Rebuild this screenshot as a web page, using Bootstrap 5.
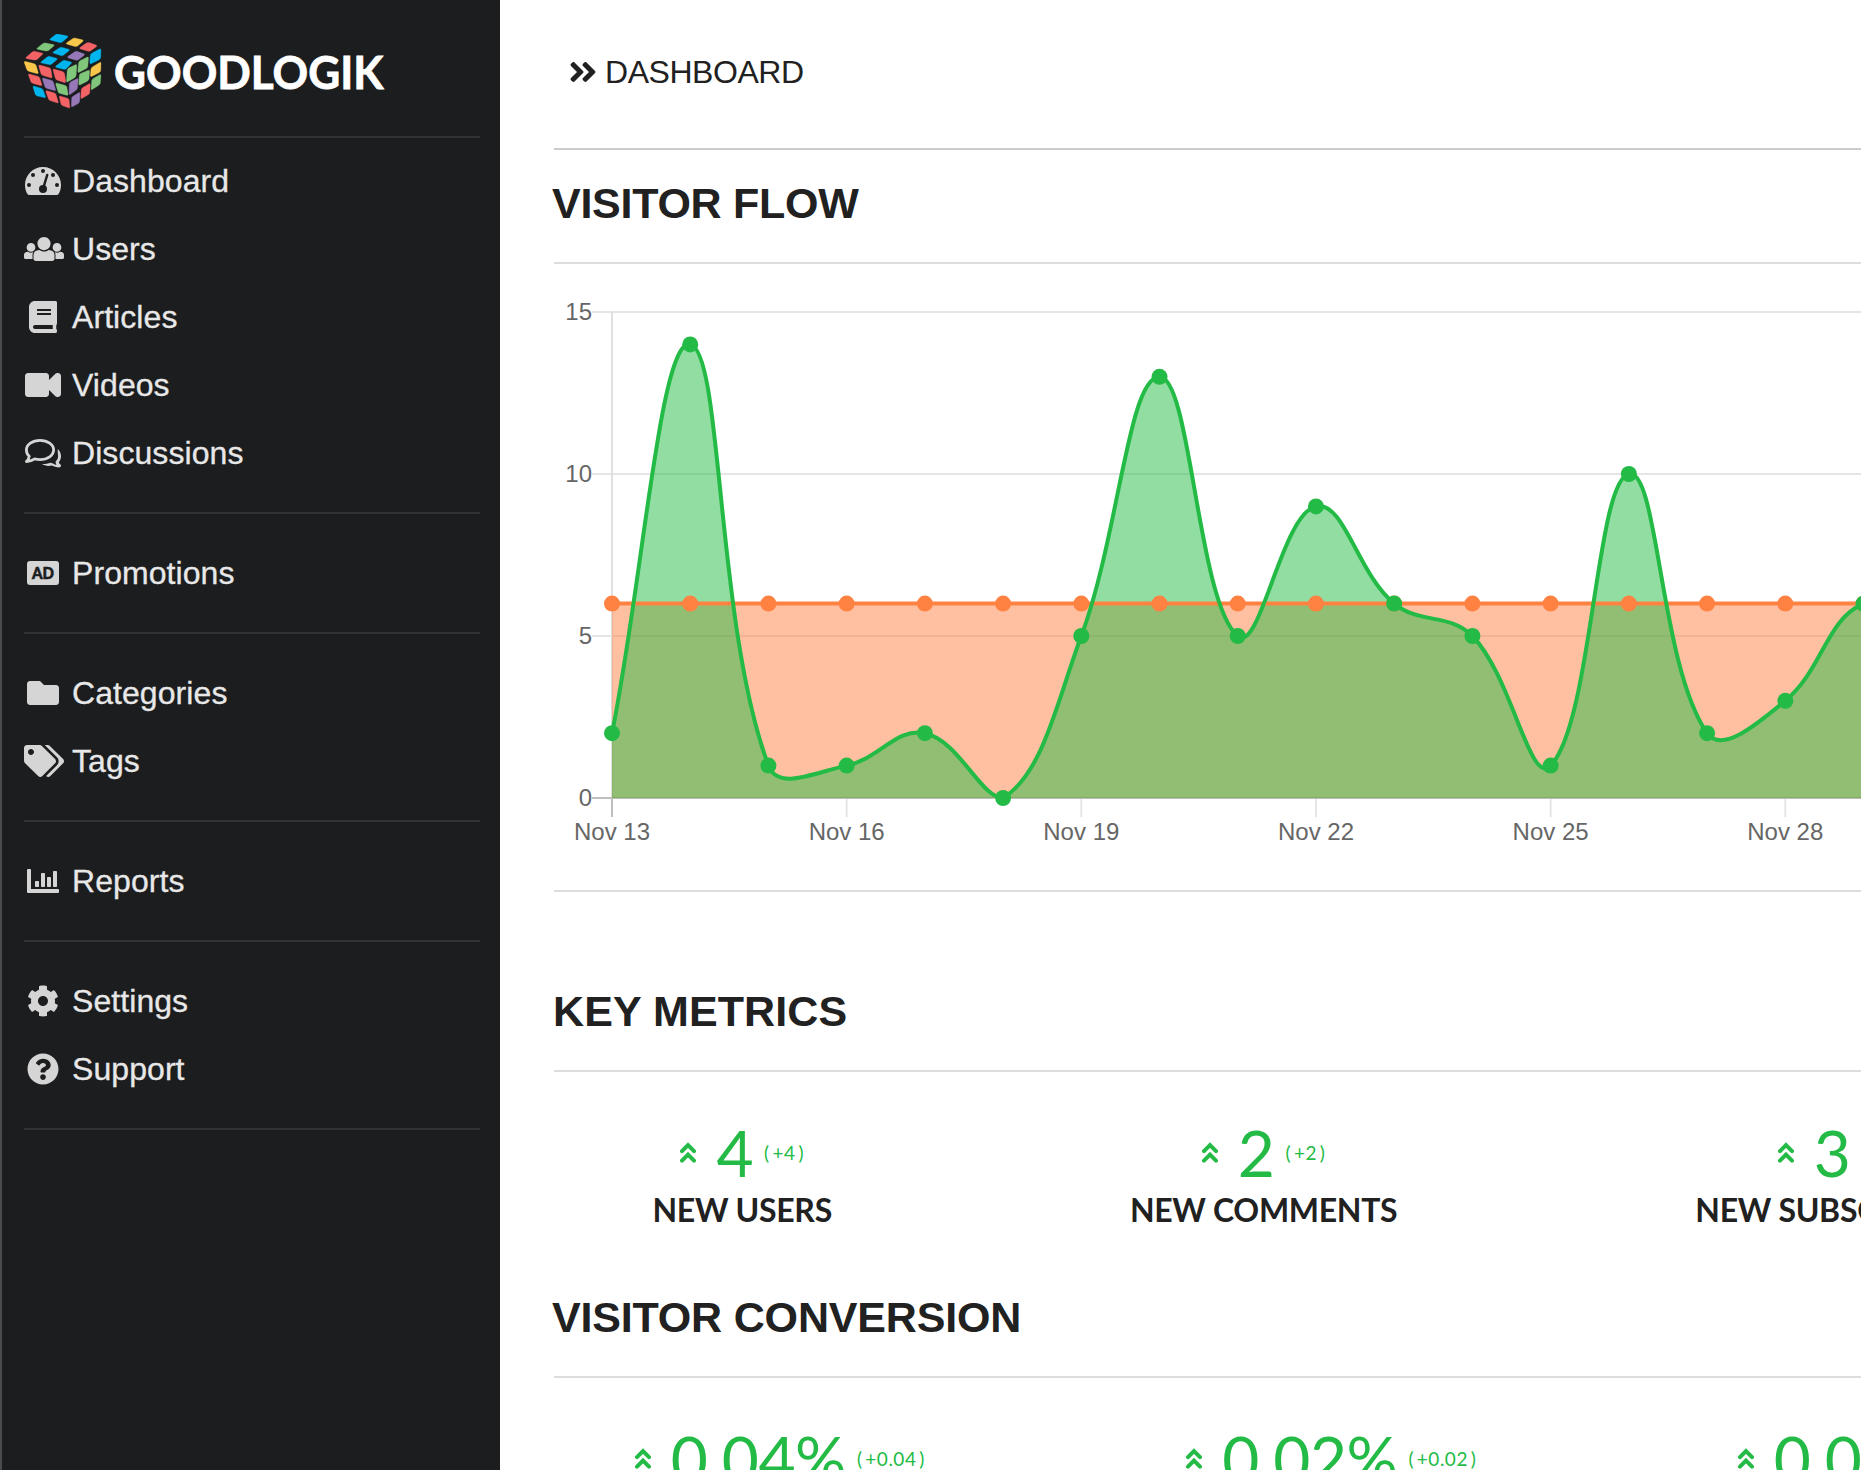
<!DOCTYPE html>
<html lang="en">
<head>
<meta charset="utf-8">
<meta name="viewport" content="width=device-width, initial-scale=1">
<title>GoodLogik Dashboard</title>
<link href="https://cdn.jsdelivr.net/npm/bootstrap@5.3.0/dist/css/bootstrap.min.css" rel="stylesheet">
<style>
  body { font-family: "Liberation Sans", Arial, sans-serif; color: #212121; background: #fff; }
  .app-shell { height: 1470px; }
  .side-panel { width: 500px; background: #1c1d1f; border-left: 2px solid #4a4b4d; padding: 34px 20px 0 22px; }
  .brand-box { height: 102px; }
  .side-panel hr { margin: 25px 0; border: 0; border-top: 2px solid #323335; opacity: 1; }
  .side-panel hr.hr-first { margin: 0 0 9px; }
  .side-link { height: 68px; line-height: 68px; font-size: 32px; color: #e8e8e8; padding: 0; letter-spacing: .07px; -webkit-text-stroke: .3px #e8e8e8; }
  .side-icon { width: 38px; height: 32px; margin-right: 10px; overflow: visible; fill: #d5d5d5; flex: none; -webkit-text-stroke: 0; }
  .main-area { padding-left: 54px; min-width: 0; }
  .main-area hr { margin: 0; border: 0; border-top: 2px solid #ddd; opacity: 1; }
  .main-area hr.hr-top { border-color: #ccc; }
  .crumb-bar { height: 148px; padding: 0 0 4px 15px; font-size: 32px; letter-spacing: -.45px; }
  .sec-title { font-size: 43px; font-weight: 700; line-height: 52px; margin: 27px 0 33px -2px; letter-spacing: -.27px; white-space: nowrap; }
  .sec-title.title-metrics { margin-top: 93px; margin-left: -1px; letter-spacing: .1px; }
  .sec-title.title-conversion { margin-top: 61px; letter-spacing: -.18px; }
  .chart-box { height: 626px; }
  .chart-box text { font-size: 24px; fill: #666; }
  .stat-row { font-family: Lato, sans-serif; margin-top: 49px; }
  .stat-row.by-content { gap: 298px; padding-left: 98.5px; }
  .stat-row.by-width > div { width: 551.5px; flex: none; }
  .stat-row.by-width { margin-left: -50px; }
  .stat-num { height: 64px; line-height: 64px; font-size: 64px; color: #23bb46; white-space: nowrap; letter-spacing: -.5px; }
  .stat-num svg { width: 16px; height: 21px; margin-right: 20px; margin-bottom: 2px; }
  .stat-diff { font-size: 19px; margin-left: 11px; letter-spacing: .5px; }
  .stat-label { font-size: 32px; font-weight: 700; line-height: 40px; margin-top: 5px; white-space: nowrap; letter-spacing: -.3px; }
</style>
</head>
<body class="overflow-hidden">
<svg class="d-none">
  <symbol id="up2" viewBox="0 0 16 21"><path d="M2 9.2 8 3.2l6 6M2 18.7l6-6 6 6" fill="none" stroke="#23bb46" stroke-width="4" stroke-linecap="round"/></symbol>
</svg>
<div class="app-shell d-flex overflow-hidden">
  <aside class="side-panel flex-shrink-0">
    <div class="brand-box">
      <svg width="370" height="76" viewBox="24 34 370 76">
        <g id="cube" transform="scale(.33333)"></g>
        <text x="114" y="88.5" font-family="Lato, sans-serif" font-weight="700" font-size="45" fill="#fff" stroke="#fff" stroke-width=".8" textLength="269.5" lengthAdjust="spacingAndGlyphs">GOODLOGIK</text>
      </svg>
    </div>
    <hr class="hr-first">
    <nav class="nav flex-column">
      <a class="nav-link side-link d-flex align-items-center" href="#"><svg class="side-icon" viewBox="0 0 38 32"><g transform="translate(1 0)"><path transform="scale(.0625)" d="M75.694 480a48.02 48.02 0 0 1-42.448-25.571C12.023 414.3 0 368.556 0 320 0 160.942 128.942 32 288 32s288 128.942 288 288c0 48.556-12.023 94.3-33.246 134.429A48.018 48.018 0 0 1 500.306 480H75.694z"/><g fill="#1c1d1f"><circle cx="18" cy="6" r="2"/><circle cx="8" cy="10" r="2"/><circle cx="28" cy="10" r="2"/><circle cx="4" cy="20" r="2"/><circle cx="32" cy="20" r="2"/><circle cx="18" cy="24" r="4"/></g><path d="M18.3 23 22.2 10" stroke="#1c1d1f" stroke-width="2.5" stroke-linecap="round"/></g></svg>Dashboard</a>
      <a class="nav-link side-link d-flex align-items-center" href="#"><svg class="side-icon" viewBox="0 0 38 32"><path transform="scale(.0625)" d="M320 64c57.99 0 105 47.01 105 105s-47.01 105-105 105-105-47.01-105-105S262.01 64 320 64zm113.463 217.366l-39.982-9.996c-49.168 35.365-108.766 27.473-146.961 0l-39.982 9.996C174.485 289.379 152 318.177 152 351.216V412c0 19.882 16.118 36 36 36h264c19.882 0 36-16.118 36-36v-60.784c0-33.039-22.485-61.837-54.537-69.85zM528 300c38.66 0 70-31.34 70-70s-31.34-70-70-70-70 31.34-70 70 31.34 70 70 70zm-416 0c38.66 0 70-31.34 70-70s-31.34-70-70-70-70 31.34-70 70 31.34 70 70 70zm24 112v-60.784c0-16.551 4.593-32.204 12.703-45.599-29.988 14.72-63.336 8.708-85.69-7.37l-26.655 6.664C14.99 310.252 0 329.452 0 351.477V392c0 13.255 10.745 24 24 24h112.169a52.417 52.417 0 0 1-.169-4zm467.642-107.09l-26.655-6.664c-27.925 20.086-60.89 19.233-85.786 7.218C499.369 318.893 504 334.601 504 351.216V412c0 1.347-.068 2.678-.169 4H616c13.255 0 24-10.745 24-24v-40.523c0-22.025-14.99-41.225-36.358-46.567z"/></svg>Users</a>
      <a class="nav-link side-link d-flex align-items-center" href="#"><svg class="side-icon" viewBox="0 0 38 32"><path transform="translate(5 0) scale(.0625)" d="M448 360V24c0-13.3-10.7-24-24-24H96C43 0 0 43 0 96v320c0 53 43 96 96 96h328c13.3 0 24-10.7 24-24v-16c0-7.5-3.5-14.3-8.9-18.7-4.2-15.4-4.2-59.3 0-74.7 5.4-4.3 8.9-11.1 8.9-18.6zM128 134c0-3.3 2.7-6 6-6h212c3.3 0 6 2.7 6 6v20c0 3.3-2.7 6-6 6H134c-3.3 0-6-2.7-6-6v-20zm0 64c0-3.3 2.7-6 6-6h212c3.3 0 6 2.7 6 6v20c0 3.3-2.7 6-6 6H134c-3.3 0-6-2.7-6-6v-20zm253.4 250H96c-17.7 0-32-14.3-32-32 0-17.6 14.4-32 32-32h285.4c-1.9 17.1-1.9 46.9 0 64z"/></svg>Articles</a>
      <a class="nav-link side-link d-flex align-items-center" href="#"><svg class="side-icon" viewBox="0 0 38 32"><path transform="translate(1 0) scale(.0625)" d="M528 64h-12.118a48 48 0 0 0-33.941 14.059L384 176v-64c0-26.51-21.49-48-48-48H48C21.49 64 0 85.49 0 112v288c0 26.51 21.49 48 48 48h288c26.51 0 48-21.49 48-48v-64l97.941 97.941A48 48 0 0 0 515.882 448H528c26.51 0 48-21.49 48-48V112c0-26.51-21.49-48-48-48z"/></svg>Videos</a>
      <a class="nav-link side-link d-flex align-items-center" href="#"><svg class="side-icon" viewBox="0 0 38 32"><path d="M16 3.4C23.6 3.4 29.6 7.6 29.6 13S23.600 22.600 16 22.600c-1.900 0-3.700-.3-5.300-.7-2.300 1.600-5 2.700-8.300 2.700 1.600-1.600 2.600-3.300 2.800-5.300C3.300 17.500 2.400 15.400 2.400 13 2.400 7.600 8.400 3.400 16 3.400z" fill="none" stroke="#d5d5d5" stroke-width="2.800" stroke-linejoin="round"/><path d="M33.800 12c2 2 3.200 4.500 3.200 7.200 0 2.300-.8 4.300-2.200 6 .3 1 .9 1.500 1.700 2.300 1.200 1.200.3 2.900-1.400 2.900-2.700 0-5.100-.7-7.200-1.800-4 .8-7.600.1-9.900-1.500 3.500 0 6.200-.5 8.500-1.400 1.500.3 2.300.6 3 1 .9.500 1.800.9 2.900 1.200-.6-1.100-.8-2.200-.8-3.400 1.700-1.500 2.500-3.300 2.500-5.200 0-2.200-.6-4.200-.3-7.300z"/></svg>Discussions</a>
    </nav>
    <hr>
    <nav class="nav flex-column">
      <a class="nav-link side-link d-flex align-items-center" href="#"><svg class="side-icon" viewBox="0 0 38 32"><rect x="3" y="4" width="32" height="24" rx="3"/><text x="8" y="22" font-size="16.500" font-weight="900" font-family="Lato, sans-serif" fill="#1c1d1f" stroke="#1c1d1f" stroke-width=".6" textLength="22" letter-spacing="0" lengthAdjust="spacingAndGlyphs">AD</text></svg>Promotions</a>
    </nav>
    <hr>
    <nav class="nav flex-column">
      <a class="nav-link side-link d-flex align-items-center" href="#"><svg class="side-icon" viewBox="0 0 38 32"><path transform="translate(3 0) scale(.0625)" d="M464 128H272l-64-64H48C21.490 64 0 85.490 0 112v288c0 26.510 21.490 48 48 48h416c26.510 0 48-21.490 48-48V176c0-26.510-21.490-48-48-48z"/></svg>Categories</a>
      <a class="nav-link side-link d-flex align-items-center" href="#"><svg class="side-icon" viewBox="0 0 38 32"><path transform="scale(.0625)" d="M497.941 225.941L286.059 14.059A48 48 0 0 0 252.118 0H48C21.490 0 0 21.490 0 48v204.118a48 48 0 0 0 14.059 33.941l211.882 211.882c18.744 18.745 49.136 18.746 67.882 0l204.118-204.118c18.745-18.745 18.745-49.137 0-67.882zM112 160c-26.510 0-48-21.490-48-48s21.490-48 48-48 48 21.490 48 48-21.490 48-48 48zm513.941 133.823L421.823 497.941c-18.745 18.745-49.137 18.745-67.882 0l-.36-.36L527.640 323.522c16.999-16.999 26.362-39.600 26.362-63.640s-9.362-46.641-26.362-63.640L331.397 0h48.721a48 48 0 0 1 33.941 14.059l211.882 211.882c18.745 18.745 18.745 49.137 0 67.882z"/></svg>Tags</a>
    </nav>
    <hr>
    <nav class="nav flex-column">
      <a class="nav-link side-link d-flex align-items-center" href="#"><svg class="side-icon" viewBox="0 0 38 32"><path d="M4 4h2a1 1 0 0 1 1 1v19h27a1 1 0 0 1 1 1v2a1 1 0 0 1-1 1H4a1 1 0 0 1-1-1V5a1 1 0 0 1 1-1z"/><rect x="11" y="16" width="4" height="6" rx=".8"/><rect x="17" y="8" width="4" height="14" rx=".8"/><rect x="23" y="12" width="4" height="10" rx=".8"/><rect x="29" y="6" width="4" height="16" rx=".8"/></svg>Reports</a>
    </nav>
    <hr>
    <nav class="nav flex-column">
      <a class="nav-link side-link d-flex align-items-center" href="#"><svg class="side-icon" viewBox="0 0 38 32"><path fill-rule="evenodd" transform="translate(3 0) scale(.0625)" d="M444.788 291.100l42.616 24.599c4.867 2.809 7.126 8.618 5.459 13.985-11.070 35.642-29.970 67.842-54.689 94.586a12.016 12.016 0 0 1-14.832 2.254l-42.584-24.595a191.577 191.577 0 0 1-60.759 35.130v49.182a12.010 12.010 0 0 1-9.377 11.718c-34.956 7.850-72.499 8.256-109.219.007-5.490-1.233-9.403-6.096-9.403-11.723v-49.184a191.555 191.555 0 0 1-60.759-35.130l-42.584 24.595a12.016 12.016 0 0 1-14.832-2.254c-24.718-26.744-43.619-58.944-54.689-94.586-1.667-5.366.592-11.175 5.459-13.985L67.212 291.100a193.480 193.480 0 0 1 0-70.199l-42.616-24.599c-4.867-2.809-7.126-8.618-5.459-13.985 11.070-35.642 29.970-67.842 54.689-94.586a12.016 12.016 0 0 1 14.832-2.254l42.584 24.595a191.577 191.577 0 0 1 60.759-35.130V25.759a12.010 12.010 0 0 1 9.377-11.718c34.956-7.850 72.499-8.256 109.219-.007 5.490 1.233 9.403 6.096 9.403 11.723v49.184a191.555 191.555 0 0 1 60.759 35.130l42.584-24.595a12.016 12.016 0 0 1 14.832 2.254c24.718 26.744 43.619 58.944 54.689 94.586 1.667 5.366-.592 11.175-5.459 13.985L444.788 220.900a193.485 193.485 0 0 1 0 70.200zM336 256c0-44.112-35.888-80-80-80s-80 35.888-80 80 35.888 80 80 80 80-35.888 80-80z"/></svg>Settings</a>
      <a class="nav-link side-link d-flex align-items-center" href="#"><svg class="side-icon" viewBox="0 0 38 32"><path fill-rule="evenodd" transform="translate(3 0) scale(.0625)" d="M504 256c0 136.997-111.043 248-248 248S8 392.997 8 256C8 119.083 119.043 8 256 8s248 111.083 248 248zM262.655 90c-54.497 0-89.255 22.957-116.549 63.758-3.536 5.286-2.353 12.415 2.715 16.258l34.699 26.310c5.205 3.947 12.621 3.008 16.665-2.122 17.864-22.658 30.113-35.797 57.303-35.797 20.429 0 45.698 13.148 45.698 32.958 0 14.976-12.363 22.667-32.534 33.976C247.128 238.528 216 254.941 216 296v4c0 6.627 5.373 12 12 12h56c6.627 0 12-5.373 12-12v-1.333c0-28.462 83.186-29.647 83.186-106.667 0-58.002-60.165-102-116.531-102zM256 338c-25.365 0-46 20.635-46 46 0 25.364 20.635 46 46 46s46-20.636 46-46c0-25.364-20.635-46-46-46z"/></svg>Support</a>
    </nav>
    <hr>
  </aside>

  <main class="main-area flex-grow-1 overflow-hidden">
    <div class="crumb-bar d-flex align-items-center">
      <svg width="28" height="32" viewBox="0 0 448 512" fill="#212121" class="me-2"><path d="M224.300 273l-136 136c-9.400 9.400-24.600 9.400-33.900 0l-22.600-22.600c-9.400-9.400-9.400-24.600 0-33.900l96.400-96.400-96.400-96.400c-9.400-9.400-9.400-24.600 0-33.900L54.300 103c9.400-9.400 24.600-9.400 33.900 0l136 136c9.500 9.400 9.500 24.600.1 34zm192-34l-136-136c-9.400-9.400-24.600-9.400-33.900 0l-22.600 22.600c-9.400 9.400-9.400 24.600 0 33.900l96.400 96.400-96.400 96.400c-9.400 9.400-9.400 24.600 0 33.900l22.600 22.600c9.400 9.400 24.600 9.400 33.900 0l136-136c9.400-9.200 9.400-24.400 0-33.800z"/></svg>DASHBOARD
    </div>
    <hr class="hr-top">
    <h2 class="sec-title">VISITOR FLOW</h2>
    <hr>
    <div class="chart-box"><svg id="flow" class="d-block" width="1307" height="626" viewBox="554 264 1307 626"></svg></div>
    <hr>
    <h2 class="sec-title title-metrics">KEY METRICS</h2>
    <hr>
    <div class="stat-row by-content d-flex">
      <div class="text-center flex-shrink-0"><div class="stat-num d-flex align-items-center justify-content-center"><svg><use href="#up2"/></svg>4<span class="stat-diff">(&thinsp;+4&thinsp;)</span></div><div class="stat-label">NEW USERS</div></div>
      <div class="text-center flex-shrink-0"><div class="stat-num d-flex align-items-center justify-content-center"><svg><use href="#up2"/></svg>2<span class="stat-diff">(&thinsp;+2&thinsp;)</span></div><div class="stat-label">NEW COMMENTS</div></div>
      <div class="text-center flex-shrink-0"><div class="stat-num d-flex align-items-center justify-content-center"><svg><use href="#up2"/></svg>3<span class="stat-diff">(&thinsp;+3&thinsp;)</span></div><div class="stat-label">NEW SUBSCRIBERS</div></div>
    </div>
    <h2 class="sec-title title-conversion">VISITOR CONVERSION</h2>
    <hr>
    <div class="stat-row by-width d-flex">
      <div><div class="stat-num d-flex align-items-center justify-content-center"><svg><use href="#up2"/></svg>0.04%<span class="stat-diff">(&thinsp;+0.04&thinsp;)</span></div></div>
      <div><div class="stat-num d-flex align-items-center justify-content-center"><svg><use href="#up2"/></svg>0.02%<span class="stat-diff">(&thinsp;+0.02&thinsp;)</span></div></div>
      <div><div class="stat-num d-flex align-items-center justify-content-center"><svg><use href="#up2"/></svg>0.03%<span class="stat-diff">(&thinsp;+0.03&thinsp;)</span></div></div>
    </div>
  </main>
</div>
<script src="https://cdn.jsdelivr.net/npm/bootstrap@5.3.0/dist/js/bootstrap.bundle.min.js"></script>
<script>
// Logo cube: one rounded tile per quad, colour key first
const B='#00b5ee',Y='#f8c64b',R='#f36366',G='#80c67b',P='#9678b8';
const tiles=[
[B,147,119,170,101,206,109,184,129],[Y,196,131,222,113,252,121,230,141],[R,236,145,264,126,293,137,268,155],
[G,108,147,132,128,165,135,143,154],[B,156,158,182,141,211,149,187,168],[P,200,172,228,153,256,163,232,182],
[R,75,175,100,153,131,160,108,181],[B,120,188,145,168,174,176,152,195],[B,164,201,191,180,217,187,196,209],
[Y,71,183,107,192,116,222,82,213],[R,115,194,152,204,157,235,124,225],[R,158,206,193,216,198,249,167,239],
[R,84,221,118,230,127,258,94,249],[P,126,233,159,242,168,273,136,264],[G,166,248,200,257,205,287,175,279],
[B,98,257,128,266,138,294,107,287],[R,136,271,167,280,176,310,147,301],[R,177,287,207,296,210,325,184,316],
[G,202,206,231,192,228,231,199,248],[G,236,184,266,169,263,204,233,219],[B,271,162,303,145,302,177,269,193],
[P,208,248,235,234,232,268,207,286],[G,238,222,269,209,267,241,236,257],[Y,273,203,303,185,302,216,271,231],
[P,215,291,240,276,239,308,214,322],[R,244,265,271,249,269,282,242,297],[G,275,238,303,222,301,253,273,271]];
document.getElementById('cube').innerHTML=tiles.map(t=>{
  const p=[[t[1],t[2]],[t[3],t[4]],[t[5],t[6]],[t[7],t[8]]],k=.17;
  const mix=(a,b)=>(a[0]+(b[0]-a[0])*k).toFixed(1)+' '+(a[1]+(b[1]-a[1])*k).toFixed(1);
  let d='';
  p.forEach((c,i)=>{d+=(i?'L':'M')+mix(c,p[(i+3)%4])+'Q'+c.join(' ')+' '+mix(c,p[(i+1)%4]);});
  return `<path fill="${t[0]}" stroke="${t[0]}" stroke-width="1" d="${d}Z"/>`;
}).join('');

// Visitor flow chart
const visits=[2,14,1,1,2,0,5,13,5,9,6,5,1,10,2,3,6,5], base=798, unit=32.4, x0=612, step=78.22;
const pts=visits.map((v,i)=>[x0+i*step,base-v*unit]);
const clamp=y=>Math.min(base,Math.max(312,y));
const ctl=pts.map((c,i)=>{
  const a=pts[i-1]||c,b=pts[i+1]||c;
  const d1=Math.hypot(c[0]-a[0],c[1]-a[1]),d2=Math.hypot(b[0]-c[0],b[1]-c[1]),s=d1+d2;
  const f1=.4*d1/s,f2=.4*d2/s,dx=b[0]-a[0],dy=b[1]-a[1];
  return [c[0]-f1*dx,clamp(c[1]-f1*dy),c[0]+f2*dx,clamp(c[1]+f2*dy)];
});
let line='M'+pts[0];
for(let i=1;i<pts.length;i++) line+=`C${ctl[i-1][2]} ${ctl[i-1][3]} ${ctl[i][0]} ${ctl[i][1]} ${pts[i]}`;
const end=pts[pts.length-1][0], avg=base-6*unit;
let s='';
[15,10,5].forEach(v=>{s+=`<path d="M592 ${base-v*unit}H1861" stroke="#e5e5e5" stroke-width="2"/>`;});
s+=`<path d="M612 312V798" stroke="#e0e0e0" stroke-width="2"/><path d="M592 798H1861M612 798V817" stroke="#bfbfbf" stroke-width="2"/>`;
for(let i=3;i<16;i+=3) s+=`<path d="M${x0+i*step} 799V817" stroke="#e5e5e5" stroke-width="2"/>`;
[0,5,10,15].forEach(v=>{s+=`<text x="592" y="${base-v*unit+8}" text-anchor="end">${v}</text>`;});
for(let i=0;i<16;i+=3) s+=`<text x="${x0+i*step}" y="840" text-anchor="middle">Nov ${13+i}</text>`;
// both fills lie under both lines
s+=`<path d="M612 ${avg}H${end}V${base}H612Z" fill="#ff8243" fill-opacity=".5"/>`;
s+=`<path d="${line}V${base}H612Z" fill="#23bb46" fill-opacity=".5"/>`;
s+=`<path d="M612 ${avg}H${end}" stroke="#ff8243" stroke-width="4"/>`;
pts.forEach(p=>{s+=`<circle cx="${p[0]}" cy="${avg}" r="8" fill="#ff8243"/>`;});
s+=`<path d="${line}" fill="none" stroke="#23bb46" stroke-width="4"/>`;
pts.forEach(p=>{s+=`<circle cx="${p[0]}" cy="${p[1]}" r="8" fill="#23bb46"/>`;});
document.getElementById('flow').innerHTML=s;
</script>
</body>
</html>
